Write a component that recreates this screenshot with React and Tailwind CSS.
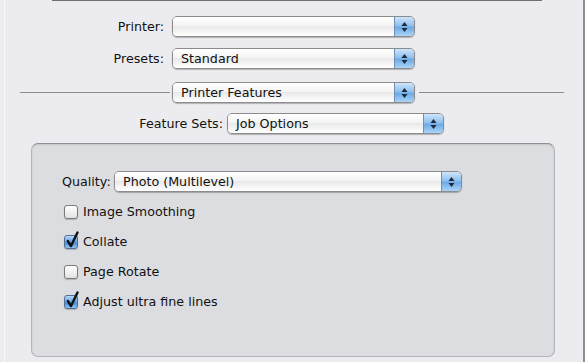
import React from 'react';

const font = { fontFamily: '"Lucida Grande", "DejaVu Sans", sans-serif' };

const Arrows = () => (
  <svg width="7" height="12" viewBox="0 0 7 12">
    <path d="M3.5 1 L6.5 5 L0.5 5 Z" fill="#1c2a3a" />
    <path d="M3.5 11 L6.5 7 L0.5 7 Z" fill="#1c2a3a" />
  </svg>
);

const Popup = ({ value, width }) => (
  <div
    className="flex h-[21px] rounded-[5px] border border-[#8c8c8c] shadow-[0_1px_1px_rgba(0,0,0,0.25)] overflow-hidden"
    style={{ width }}
  >
    <div className="flex-1 flex items-center pl-[8px] text-[12.7px] text-[#111] bg-[linear-gradient(#ffffff_0%,#f4f4f4_45%,#e9e9e9_50%,#ffffff_100%)]">
      {value}
    </div>
    <div className="w-[20px] flex items-center justify-center border-l border-[#6d8fb8] bg-[linear-gradient(#cfe5fa_0%,#8fc0ee_45%,#6eaae6_55%,#a9d4f7_100%)]">
      <Arrows />
    </div>
  </div>
);

const Checkbox = ({ checked, label }) => (
  <div className="flex items-center h-[30px]">
    <div
      className={
        checked
          ? 'relative w-[14px] h-[14px] rounded-[3px] border border-[#4f6f97] shadow-[0_1px_1px_rgba(0,0,0,0.2)] bg-[linear-gradient(#b8daf9,#5f9fe2_50%,#4a8fdb_60%,#92c4f2)]'
          : 'relative w-[14px] h-[14px] rounded-[3px] border border-[#7a7a7a] shadow-[0_1px_1px_rgba(0,0,0,0.2)] bg-[linear-gradient(#ffffff,#e3e3e3)]'
      }
    >
      {checked && (
        <svg className="absolute left-[1px] top-[-5px]" width="13" height="17" viewBox="0 0 13 17">
          <path d="M1.8 10 L5 15 L11.5 1.5" fill="none" stroke="#111" strokeWidth="2.4" strokeLinecap="round" strokeLinejoin="round" />
        </svg>
      )}
    </div>
    <span className="ml-[5px] text-[12.7px] text-[#111]">{label}</span>
  </div>
);

export default function App() {
  return (
    <div
      className="relative w-[585px] h-[362px] overflow-hidden bg-[#ececf0] border-r-2 border-[#8a8d94]"
      style={font}
    >
      <div className="absolute top-0 left-[52px] w-[490px] h-px bg-[#6f6f6f]" />
      <div className="absolute top-0 left-[4px] w-px h-full bg-[#f8f8fa]" />

      <div className="flex flex-col pt-[16px]">
        <div className="flex items-center">
          <div className="w-[164px] text-right text-[12.7px] text-[#111]">Printer:</div>
          <div className="ml-[8px]"><Popup value="" width={243} /></div>
        </div>
        <div className="flex items-center mt-[11px]">
          <div className="w-[164px] text-right text-[12.7px] text-[#111]">Presets:</div>
          <div className="ml-[8px]"><Popup value="Standard" width={243} /></div>
        </div>
        <div className="flex items-center mt-[13px] pl-[20px]">
          <div className="w-[150px] h-px bg-[#8a8a8a]" />
          <div className="ml-[2px]"><Popup value="Printer Features" width={243} /></div>
          <div className="ml-[4px] w-[145px] h-px bg-[#8a8a8a]" />
        </div>
        <div className="flex items-center mt-[10px]">
          <div className="w-[223px] text-right text-[12.7px] text-[#111]">Feature Sets:</div>
          <div className="ml-[4px]"><Popup value="Job Options" width={217} /></div>
        </div>

        <div className="ml-[31px] mt-[9px] w-[524px] h-[214px] rounded-[7px] bg-[#dcdde1] border border-[#b4b5ba] border-t-[#8f9095] shadow-[inset_0_1px_2px_rgba(0,0,0,0.12)] pl-[30px] pt-[27px]">
          <div className="flex items-center">
            <span className="w-[52px] text-[12.7px] text-[#111]">Quality:</span>
            <Popup value="Photo (Multilevel)" width={348} />
          </div>
          <div className="flex flex-col mt-[5px] pl-[2px]">
            <Checkbox label="Image Smoothing" />
            <Checkbox checked label="Collate" />
            <Checkbox label="Page Rotate" />
            <Checkbox checked label="Adjust ultra fine lines" />
          </div>
        </div>
      </div>
    </div>
  );
}
